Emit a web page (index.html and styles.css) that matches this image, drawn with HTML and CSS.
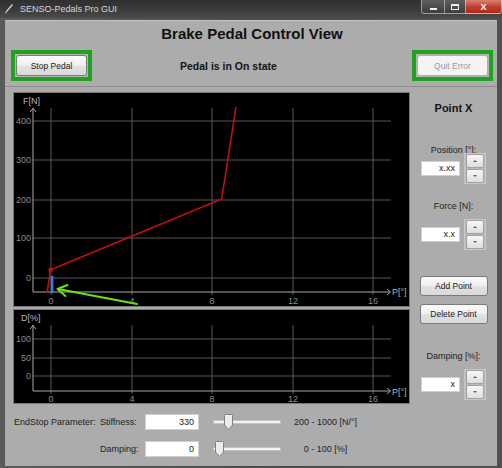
FILE: index.html
```html
<!DOCTYPE html>
<html lang="en">
<head>
<meta charset="utf-8">
<title>SENSO-Pedals Pro GUI</title>
<link rel="stylesheet" href="styles.css">
</head>
<body>
<div class="window">
  <div class="titlebar">
    <svg class="app-icon" width="10" height="12" viewBox="0 0 10 12"><path d="M1 11 L2 8 L8 1 L9 2 L3 9 Z" fill="#cfcfcf"/><path d="M1 11 L2 8 L3 9 Z" fill="#888"/></svg>
    <span class="title">SENSO-Pedals Pro GUI</span>
    <div class="controls">
      <div class="ctl min"><span class="g-min"></span></div>
      <div class="ctl max"><span class="g-max"></span></div>
      <div class="ctl close"><span class="g-close">X</span></div>
    </div>
  </div>
  <div class="client">
    <div class="top">
      <h1>Brake Pedal Control View</h1>
      <div class="toprow">
        <div class="hl"><button class="btn">Stop Pedal</button></div>
        <div class="state">Pedal is in On state</div>
        <div class="hl"><button class="btn" disabled>Quit Error</button></div>
      </div>
    </div>
    <div class="middle">
      <div class="charts">
        <svg class="chart chart-f" viewBox="0 0 395 213">
          <g class="grid">
            <line x1="37" y1="15" x2="37" y2="202"/>
            <line x1="118" y1="15" x2="118" y2="202"/>
            <line x1="198" y1="15" x2="198" y2="202"/>
            <line x1="279" y1="15" x2="279" y2="202"/>
            <line x1="359" y1="15" x2="359" y2="202"/>
            <line x1="19" y1="28" x2="377" y2="28"/>
            <line x1="19" y1="67" x2="377" y2="67"/>
            <line x1="19" y1="107" x2="377" y2="107"/>
            <line x1="19" y1="145" x2="377" y2="145"/>
            <line x1="19" y1="185" x2="377" y2="185"/>
          </g>
          <g class="axis">
            <line x1="19" y1="15" x2="19" y2="199"/>
            <line x1="19" y1="199" x2="376" y2="199"/>
            <polyline points="16,19 19,15.5 22,19"/>
            <polyline points="373,196 376.5,199 373,202"/>
          </g>
          <text class="unit" x="9" y="11">F[N]</text>
          <text class="unit" x="378" y="202">P[°]</text>
          <g class="ylab">
            <text x="17" y="31">400</text>
            <text x="17" y="70">300</text>
            <text x="17" y="110">200</text>
            <text x="17" y="148">100</text>
            <text x="17" y="188">0</text>
          </g>
          <g class="xlab">
            <text x="37" y="211">0</text>
            <text x="118" y="211">4</text>
            <text x="198" y="211">8</text>
            <text x="279" y="211">12</text>
            <text x="359" y="211">16</text>
          </g>
          <polyline class="curve" points="33,200 36.7,176.7 207.7,106 222,14"/>
          <circle cx="36.7" cy="176.7" r="2.2" fill="#d01010"/>
          <rect x="36.8" y="183" width="2.6" height="17" fill="#2f80dc"/>
          <g class="pointer">
            <line x1="123" y1="211" x2="44" y2="196"/>
            <polyline points="53.5,192 43.5,196 51.5,203"/>
          </g>
        </svg>
        <svg class="chart chart-d" viewBox="0 0 395 93">
          <g class="grid">
            <line x1="37" y1="15" x2="37" y2="84"/>
            <line x1="118" y1="15" x2="118" y2="84"/>
            <line x1="198" y1="15" x2="198" y2="84"/>
            <line x1="279" y1="15" x2="279" y2="84"/>
            <line x1="359" y1="15" x2="359" y2="84"/>
            <line x1="19" y1="29" x2="377" y2="29"/>
            <line x1="19" y1="48" x2="377" y2="48"/>
            <line x1="19" y1="66" x2="377" y2="66"/>
          </g>
          <g class="axis">
            <line x1="19" y1="15" x2="19" y2="81"/>
            <line x1="19" y1="81" x2="376" y2="81"/>
            <polyline points="16,19 19,15.5 22,19"/>
            <polyline points="373,78 376.5,81 373,84"/>
          </g>
          <text class="unit" x="7" y="11">D[%]</text>
          <text class="unit" x="378" y="85">P[°]</text>
          <g class="ylab">
            <text x="17" y="32">100</text>
            <text x="17" y="51">50</text>
            <text x="17" y="69">0</text>
          </g>
          <g class="xlab">
            <text x="37" y="92">0</text>
            <text x="118" y="92">4</text>
            <text x="198" y="92">8</text>
            <text x="279" y="92">12</text>
            <text x="359" y="92">16</text>
          </g>
        </svg>
      </div>
      <div class="side">
        <div class="side-title">Point X</div>
        <div class="lbl lbl-pos">Position [°]:</div>
        <div class="spinrow spin-pos">
          <div class="field small">x.xx</div>
          <div class="spinner"><span class="sb up"></span><span class="sb down"></span></div>
        </div>
        <div class="lbl lbl-force">Force [N]:</div>
        <div class="spinrow spin-force">
          <div class="field small">x.x</div>
          <div class="spinner"><span class="sb up"></span><span class="sb down"></span></div>
        </div>
        <button class="btn side-btn add">Add Point</button>
        <button class="btn side-btn del">Delete Point</button>
        <div class="lbl lbl-damp">Damping [%]:</div>
        <div class="spinrow spin-damp">
          <div class="field small">x</div>
          <div class="spinner"><span class="sb up"></span><span class="sb down"></span></div>
        </div>
      </div>
    </div>
    <div class="params">
      <div class="plabel">EndStop Parameter:</div>
      <div class="plabel">Stiffness:</div>
      <div class="field wide">330</div>
      <div class="slider"><div class="track"></div><svg class="thumb" style="left:11px" width="9" height="16" viewBox="0 0 9 16"><path d="M0.5 1.5 Q0.5 0.5 1.5 0.5 H7.5 Q8.5 0.5 8.5 1.5 V11 L4.5 15.5 L0.5 11 Z"/></svg></div>
      <div class="range">200 - 1000 [N/°]</div>
      <div></div>
      <div class="plabel">Damping:</div>
      <div class="field wide">0</div>
      <div class="slider"><div class="track"></div><svg class="thumb" style="left:2px" width="9" height="16" viewBox="0 0 9 16"><path d="M0.5 1.5 Q0.5 0.5 1.5 0.5 H7.5 Q8.5 0.5 8.5 1.5 V11 L4.5 15.5 L0.5 11 Z"/></svg></div>
      <div class="range">0 - 100 [%]</div>
    </div>
  </div>
</div>
</body>
</html>
```
FILE: styles.css
```css
* { box-sizing: border-box; }
html, body { margin: 0; padding: 0; }
body {
  width: 502px;
  height: 468px;
  overflow: hidden;
  background: #bdbdbd;
  font-family: "Liberation Sans", Arial, sans-serif;
  color: #151515;
}
.window {
  width: 502px;
  height: 468px;
  background: linear-gradient(90deg, #5a5a5a 0%, #4c4c4c 50%, #505050 100%);
  display: flex;
  flex-direction: column;
}
.titlebar {
  height: 18px;
  display: flex;
  align-items: flex-start;
  background: linear-gradient(180deg, #2f2f2f 0%, #3b3b3b 55%, #4b4b4b 100%);
  color: #d6d6d6;
  font-size: 9px;
}
.app-icon { margin: 3px 0 0 4px; }
.title { margin: 4px 0 0 6px; line-height: 10px; }
.controls { margin-left: auto; display: flex; height: 14px; }
.ctl {
  height: 14px;
  border: 1px solid rgba(220, 220, 220, 0.55);
  border-top: none;
  display: flex;
  align-items: center;
  justify-content: center;
  background: linear-gradient(180deg, #5e5e5e, #3e3e3e);
}
.min { width: 23px; border-radius: 0 0 0 3px; border-right: none; }
.max { width: 21px; border-right: none; }
.close {
  width: 37px;
  border-radius: 0 0 3px 0;
  background: linear-gradient(180deg, #d98272 0%, #c3412f 50%, #a82a1c 100%);
}
.g-min { width: 7px; height: 2px; background: #f0f0f0; margin-top: 5px; }
.g-max { width: 8px; height: 6px; border: 1px solid #f0f0f0; border-top-width: 2px; }
.g-close { color: #fff; font-size: 9px; font-weight: 700; line-height: 10px; }

.client {
  margin: 2px 5px 0 5px;
  height: 446px;
  background: #acacac;
  border-top: 1px solid #c4c4c4;
}
.top {
  height: 66px;
  padding: 4px 4px 0 6px;
  border-bottom: 1px solid #8c8c8c;
}
h1 {
  margin: 0;
  font-size: 15px;
  line-height: 18px;
  font-weight: 700;
  text-align: center;
  color: #111;
}
.toprow {
  display: flex;
  align-items: center;
  margin-top: 7px;
}
.hl {
  border: 4px solid #1fa31f;
  padding: 1px;
  background: #b4b4b4;
}
.btn {
  display: block;
  width: 71px;
  height: 21px;
  padding: 0;
  font-family: "Liberation Sans", Arial, sans-serif;
  font-size: 8.5px;
  color: #1a1a1a;
  border: 1px solid #7a7a7a;
  border-radius: 3px;
  background: linear-gradient(180deg, #fbfbfb 0%, #efefef 48%, #e2e2e2 52%, #d9d9d9 100%);
}
.btn:disabled {
  color: #9a9a9a;
  border-color: #adadad;
  background: #f4f4f4;
}
.state {
  flex: 1;
  margin-left: 88px;
  font-size: 10.5px;
  font-weight: 700;
  color: #141414;
}

.middle {
  display: flex;
  padding-top: 5px;
}
.charts {
  display: flex;
  flex-direction: column;
  gap: 2px;
  margin-left: 8px;
}
.chart {
  display: block;
  width: 397px;
  background: #000;
  border: 1px solid #777;
}
.chart-f { height: 215px; }
.chart-d { height: 95px; }
.grid line { stroke: #585858; stroke-width: 1; }
.axis line, .axis polyline { stroke: #a8a8a8; stroke-width: 1; fill: none; }
.unit { fill: #b4b4b4; font-size: 9px; font-family: "Liberation Sans", Arial, sans-serif; }
.ylab text { fill: #8c8c8c; font-size: 9px; text-anchor: end; font-family: "Liberation Sans", Arial, sans-serif; }
.xlab text { fill: #8c8c8c; font-size: 9px; text-anchor: middle; font-family: "Liberation Sans", Arial, sans-serif; }
.curve { fill: none; stroke: #c21010; stroke-width: 1.6; stroke-linejoin: round; }
.pointer line, .pointer polyline { stroke: #6de01c; stroke-width: 2; fill: none; stroke-linecap: round; stroke-linejoin: round; }

.side {
  width: 87px;
  display: flex;
  flex-direction: column;
  align-items: center;
  padding-top: 9px;
}
.side-title { font-size: 11px; font-weight: 700; line-height: 14px; color: #151515; }
.lbl { font-size: 9px; line-height: 10px; color: #1e1e1e; }
.lbl-pos { margin-top: 29.5px; }
.spin-pos { margin-top: -1.5px; }
.lbl-force { margin-top: 17px; }
.spin-force { margin-top: 8px; }
.add { margin-top: 26px; }
.del { margin-top: 8px; }
.lbl-damp { margin-top: 27px; }
.spin-damp { margin-top: 8px; }
.side-btn { width: 68px; height: 20px; font-size: 8.5px; }
.spinrow {
  display: flex;
  align-items: center;
  gap: 4px;
}
.field {
  background: #fff;
  border: 1px solid #d0d0d0;
  text-align: right;
  font-size: 9px;
  color: #222;
  padding-right: 4px;
}
.field.small { width: 39px; height: 15px; line-height: 13px; }
.field.wide { width: 54px; height: 16px; line-height: 14px; }
.spinner {
  width: 22px;
  height: 31px;
  border: 1px solid #c8c8c8;
  padding: 0 1px;
  display: flex;
  flex-direction: column;
  justify-content: space-between;
  background: #b8b8b8;
}
.sb {
  height: 14px;
  border: 1px solid #a2a2a2;
  border-radius: 2px;
  background: linear-gradient(180deg, #f7f7f7, #dedede);
  display: flex;
  align-items: center;
  justify-content: center;
}
.sb::after {
  content: "";
  width: 0;
  height: 0;
  border-left: 2px solid transparent;
  border-right: 2px solid transparent;
}
.up::after { border-bottom: 2px solid #4d5f86; }
.down::after { border-top: 2px solid #4d5f86; }

.params {
  display: grid;
  grid-template-columns: 86px 45px 54px 82px 89px;
  grid-auto-rows: 16px;
  row-gap: 11px;
  align-items: center;
  padding: 10px 0 0 9px;
  font-size: 9px;
  color: #1e1e1e;
}
.plabel { line-height: 10px; }
.slider {
  position: relative;
  margin-left: 14px;
  width: 68px;
  height: 16px;
}
.track {
  margin-top: 6px;
  height: 4px;
  background: #f3f3f3;
  border: 1px solid #c2c2c2;
  border-radius: 1px;
}
.thumb {
  position: absolute;
  top: 0;
}
.thumb path { fill: #ececec; stroke: #808080; stroke-width: 1; }
.range { text-align: center; line-height: 10px; }
```
